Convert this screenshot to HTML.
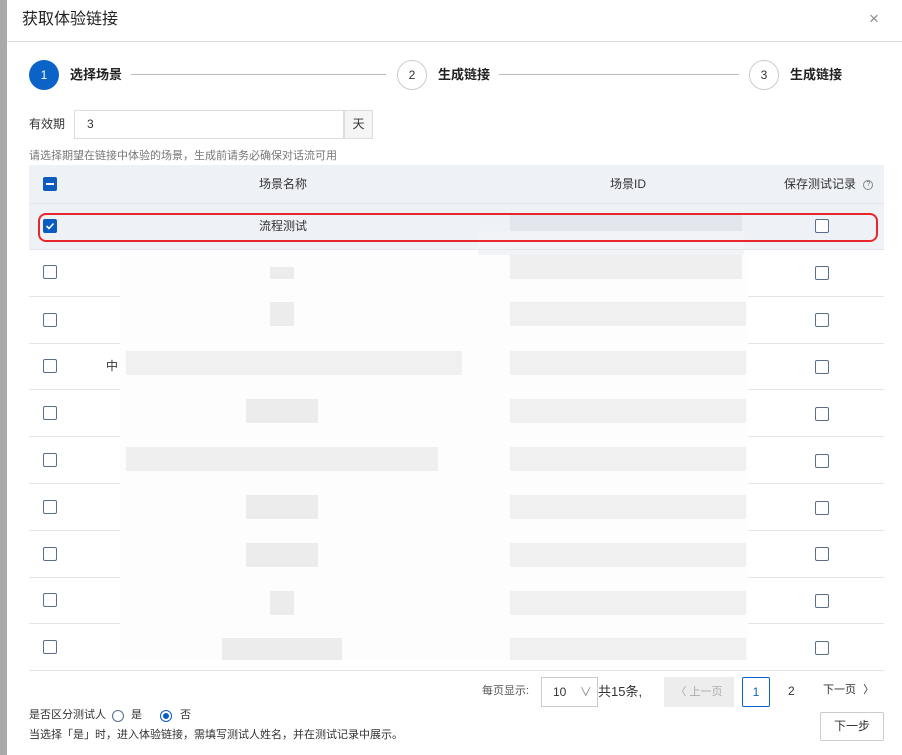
<!DOCTYPE html>
<html><head><meta charset="utf-8"><style>
*{margin:0;padding:0;box-sizing:border-box}
body{width:902px;height:755px;overflow:hidden;background:#fff;font-family:"Liberation Sans","Noto Sans CJK SC",sans-serif;color:#333;position:relative;font-size:12px;line-height:1.2}
.a{position:absolute}
.cb{position:absolute;width:14px;height:14px;border:1px solid #5a6d8a;border-radius:2px;background:#fff}
.line{position:absolute;left:29px;width:855px;height:1px;background:#e3e5e8}
.g{position:absolute;background:#ececec}
</style></head><body>
<div class="a" style="left:0;top:0;width:7px;height:755px;background:#a9a9a9"></div>
<div class="a" style="left:22px;top:10px;font-size:16px;color:#222">获取体验链接</div>
<div class="a" style="left:869px;top:9px;font-size:17px;color:#888">×</div>
<div class="a" style="left:7px;top:41px;width:895px;height:1px;background:#ddd"></div>

<div class="a" style="left:29px;top:60px;width:30px;height:30px;border-radius:50%;background:#0b63c8;color:#fff;text-align:center;line-height:30px;font-size:12px">1</div>
<div class="a" style="left:70px;top:67px;font-size:13px;font-weight:bold;color:#222">选择场景</div>
<div class="a" style="left:131px;top:74px;width:255px;height:1px;background:#bbb"></div>
<div class="a" style="left:397px;top:60px;width:30px;height:30px;border-radius:50%;border:1px solid #ccc;color:#333;text-align:center;line-height:28px;font-size:12px">2</div>
<div class="a" style="left:438px;top:67px;font-size:13px;font-weight:bold;color:#222">生成链接</div>
<div class="a" style="left:499px;top:74px;width:240px;height:1px;background:#bbb"></div>
<div class="a" style="left:749px;top:60px;width:30px;height:30px;border-radius:50%;border:1px solid #ccc;color:#333;text-align:center;line-height:28px;font-size:12px">3</div>
<div class="a" style="left:790px;top:67px;font-size:13px;font-weight:bold;color:#222">生成链接</div>

<div class="a" style="left:29px;top:117px;font-size:12px">有效期</div>
<div class="a" style="left:74px;top:110px;width:270px;height:29px;border:1px solid #ddd;padding-left:12px;line-height:27px">3</div>
<div class="a" style="left:344px;top:110px;width:29px;height:29px;border:1px solid #ddd;background:#f5f5f5;text-align:center;line-height:27px">天</div>
<div class="a" style="left:29px;top:150px;font-size:11px;color:#777">请选择期望在链接中体验的场景，生成前请务必确保对话流可用</div>

<div class="a" style="left:29px;top:165px;width:855px;height:38px;background:#eef1f6"></div>
<div class="cb" style="left:43px;top:177px;background:#0b5cc0;border-color:#0b5cc0"><div class="a" style="left:2px;top:5px;width:8px;height:2px;background:#fff"></div></div>
<div class="a" style="left:259px;top:177px;">场景名称</div>
<div class="a" style="left:610px;top:177px;">场景ID</div>
<div class="a" style="left:784px;top:177px;">保存测试记录 <span style="display:inline-block;width:10px;height:10px;border:1px solid #888;border-radius:50%;font-size:7px;text-align:center;line-height:8px;margin-left:4px;color:#666;vertical-align:middle">?</span></div>
<div class="line" style="top:203px"></div>
<div class="a" style="left:29px;top:204px;width:855px;height:45px;background:#eef1f6"></div>
<div class="g" style="left:510px;top:215px;width:232px;height:17px;background:#e3e6ec"></div>
<div class="a" style="left:478px;top:231px;width:266px;height:24px;background:#f1f3f7"></div>
<div class="a" style="left:38px;top:213px;width:840px;height:29px;border:2px solid #e8262b;border-radius:8px"></div>
<div class="cb" style="left:43px;top:219px;background:#0b5cc0;border-color:#0b5cc0"><svg class="a" style="left:1px;top:1px" width="10" height="10" viewBox="0 0 10 10"><path d="M1.5 5 L4 7.5 L8.5 2.5" stroke="#fff" stroke-width="1.6" fill="none"/></svg></div>
<div class="a" style="left:259px;top:219px;">流程测试</div>
<div class="cb" style="left:815px;top:219px"></div>

<div class="line" style="top:249px"></div>
<div class="line" style="top:296px"></div>
<div class="line" style="top:343px"></div>
<div class="line" style="top:389px"></div>
<div class="line" style="top:436px"></div>
<div class="line" style="top:483px"></div>
<div class="line" style="top:530px"></div>
<div class="line" style="top:577px"></div>
<div class="line" style="top:623px"></div>
<div class="line" style="top:670px"></div>

<div class="a" style="left:120px;top:255px;width:628px;height:406px;background:#fdfdfd"></div>
<div class="g" style="left:510px;top:255px;width:232px;height:24px;background:#efefef"></div>
<div class="g" style="left:270px;top:267px;width:24px;height:12px"></div>
<div class="g" style="left:510px;top:302px;width:236px;height:24px;background:#f0f0f0"></div>
<div class="g" style="left:270px;top:302px;width:24px;height:24px"></div>
<div class="a" style="left:106px;top:359px">中</div>
<div class="g" style="left:126px;top:351px;width:336px;height:24px;background:#f0f0f0"></div>
<div class="g" style="left:510px;top:351px;width:236px;height:24px;background:#f0f0f0"></div>
<div class="g" style="left:246px;top:399px;width:72px;height:24px"></div>
<div class="g" style="left:510px;top:399px;width:236px;height:24px;background:#f0f0f0"></div>
<div class="g" style="left:126px;top:447px;width:312px;height:24px;background:#efefef"></div>
<div class="g" style="left:510px;top:447px;width:236px;height:24px;background:#f0f0f0"></div>
<div class="g" style="left:246px;top:495px;width:72px;height:24px"></div>
<div class="g" style="left:510px;top:495px;width:236px;height:24px;background:#f0f0f0"></div>
<div class="g" style="left:246px;top:543px;width:72px;height:24px"></div>
<div class="g" style="left:510px;top:543px;width:236px;height:24px;background:#f0f0f0"></div>
<div class="g" style="left:270px;top:591px;width:24px;height:24px"></div>
<div class="g" style="left:510px;top:591px;width:236px;height:24px;background:#f0f0f0"></div>
<div class="g" style="left:222px;top:638px;width:120px;height:22px"></div>
<div class="g" style="left:510px;top:638px;width:236px;height:22px;background:#f0f0f0"></div>

<div class="cb" style="left:43px;top:265px"></div><div class="cb" style="left:815px;top:266px"></div>
<div class="cb" style="left:43px;top:313px"></div><div class="cb" style="left:815px;top:313px"></div>
<div class="cb" style="left:43px;top:359px"></div><div class="cb" style="left:815px;top:360px"></div>
<div class="cb" style="left:43px;top:406px"></div><div class="cb" style="left:815px;top:407px"></div>
<div class="cb" style="left:43px;top:453px"></div><div class="cb" style="left:815px;top:454px"></div>
<div class="cb" style="left:43px;top:500px"></div><div class="cb" style="left:815px;top:501px"></div>
<div class="cb" style="left:43px;top:547px"></div><div class="cb" style="left:815px;top:547px"></div>
<div class="cb" style="left:43px;top:593px"></div><div class="cb" style="left:815px;top:594px"></div>
<div class="cb" style="left:43px;top:640px"></div><div class="cb" style="left:815px;top:641px"></div>

<div class="a" style="left:482px;top:685px;font-size:11px;color:#555">每页显示:</div>
<div class="a" style="left:541px;top:677px;width:57px;height:30px;border:1px solid #ccc;padding-left:11px;line-height:28px;font-size:12px">10 <span style="margin-left:10px;color:#888">∨</span></div>
<div class="a" style="left:598px;top:684px;font-size:13px">共15条,</div>
<div class="a" style="left:664px;top:677px;width:70px;height:30px;background:#ededed;color:#aaa;line-height:30px;text-align:center;font-size:11px">〈 上一页</div>
<div class="a" style="left:742px;top:677px;width:28px;height:30px;border:1px solid #0b63c8;border-radius:2px;color:#0b63c8;text-align:center;line-height:28px">1</div>
<div class="a" style="left:788px;top:684px">2</div>
<div class="a" style="left:823px;top:684px;font-size:11px">下一页 <span style="margin-left:4px">〉</span></div>

<div class="a" style="left:29px;top:709px;font-size:11px">是否区分测试人</div>
<div class="a" style="left:112px;top:710px;width:12px;height:12px;border:1px solid #5a6d8a;border-radius:50%"></div>
<div class="a" style="left:131px;top:709px;font-size:11px">是</div>
<div class="a" style="left:160px;top:710px;width:12px;height:12px;border:1px solid #0b5cc0;border-radius:50%"><div class="a" style="left:2px;top:2px;width:6px;height:6px;border-radius:50%;background:#0b5cc0"></div></div>
<div class="a" style="left:180px;top:709px;font-size:11px">否</div>
<div class="a" style="left:29px;top:729px;font-size:11px">当选择「是」时，进入体验链接，需填写测试人姓名，并在测试记录中展示。</div>
<div class="a" style="left:820px;top:712px;width:64px;height:29px;border:1px solid #ccc;border-radius:2px;text-align:center;line-height:27px;font-size:12px">下一步</div>
</body></html>
